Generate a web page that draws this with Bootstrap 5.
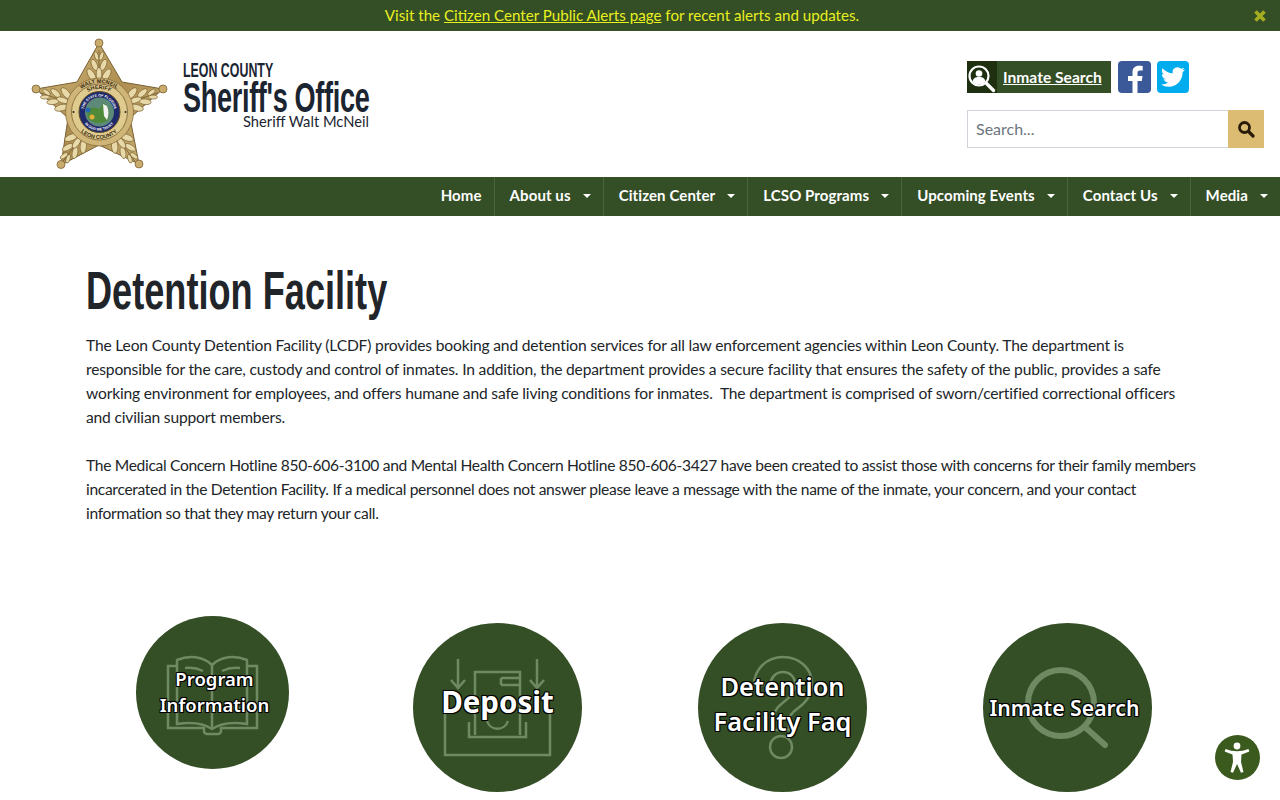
<!DOCTYPE html>
<html lang="en">

<head>
    <meta charset="UTF-8">
    <meta name="viewport" content="width=device-width, initial-scale=1.0">
    <title>Detention Facility - Leon County Sheriff's Office</title>
    <link href="https://cdn.jsdelivr.net/npm/bootstrap@5.3.0/dist/css/bootstrap.min.css" rel="stylesheet">
    <style>
        body {
            font-family: "Lato", "Liberation Sans", sans-serif;
            font-size: 16px;
            line-height: 24px;
            color: #212529;
            background: #fff;
        }

        .lc-alert {
            height: 31px;
            padding-right: 36px;
            background: #344e26;
            color: #e9f01f;
            font-size: 15.15px;
            line-height: 31px;
        }

        .lc-alert a { color: #e9f01f; }

        .lc-close {
            position: absolute;
            top: 9px;
            right: 13px;
            width: 14px;
            height: 14px;
            padding: 0;
            border: 0;
            background: none;
            line-height: 0;
        }

        .lc-head { height: 146px; padding: 7px 16px 0 30px; }

        .lc-brand {
            width: 186px;
            margin: 23px 0 0 13px;
            color: #1b2431;
        }

        /* no condensed family is installed, so the headline text is squeezed */
        .lc-county, .lc-office, .lc-title {
            font-family: "Liberation Sans", sans-serif;
            font-weight: 700;
            white-space: nowrap;
            transform-origin: left center;
        }

        .lc-county { font-size: 21px; line-height: 18px; transform: scaleX(.59); }
        .lc-office { font-size: 42px; line-height: 39px; margin-top: -1px; letter-spacing: -.5px; transform: scaleX(.645); }
        .lc-sheriff { font-size: 14.7px; line-height: 15px; text-align: right; margin-top: -3px; }

        .lc-side { width: 297px; padding-top: 23px; }

        .lc-inmate {
            width: 144px;
            height: 32px;
            background: #344e26;
            color: #fff;
            font-weight: 700;
            font-size: 15.6px;
            line-height: 33px;
        }

        .lc-inmate a { color: #fff; }

        .lc-inmate-ico {
            width: 30px;
            height: 32px;
            background: #1e3010;
            margin-right: 6px;
        }

        .lc-social { width: 33px; height: 32px; border-radius: 4px; }
        .lc-fb { background: #3b5998; margin-left: 7px; overflow: hidden; }
        .lc-tw { background: #00acee; margin-left: 6px; width: 32px; }

        .lc-search { margin-top: 17px; height: 38px; }

        .lc-search .form-control {
            height: 38px;
            border-radius: 0;
            font-size: 16px;
            padding: 0 8px 2px;
            border-color: #ced4da;
        }

        .lc-search .form-control::placeholder { color: #6c757d; }

        .lc-search .btn {
            width: 36px;
            height: 38px;
            padding: 0 0 3px;
            border: 0;
            border-radius: 0;
            background: #dcbc73;
        }

        .lc-nav {
            height: 39px;
            padding: 0;
            background: #344e26;
            justify-content: flex-end;
        }

        .lc-nav .navbar-nav { flex-direction: row; }

        .lc-nav .nav-item + .nav-item { border-left: 1px solid #4a6339; }

        .lc-nav .nav-link {
            display: flex;
            align-items: center;
            height: 39px;
            padding: 0 12px 3px 15px;
            color: #fff;
            font-weight: 700;
            font-size: 15px;
            letter-spacing: .1px;
        }

        .lc-nav .lc-caret::after {
            content: "";
            margin: 2px 0 0 12px;
            border-top: 4px solid #fff;
            border-left: 4px solid transparent;
            border-right: 4px solid transparent;
        }

        .lc-main { padding-top: 44px; }

        .lc-title {
            font-size: 53px;
            line-height: 62px;
            color: #212529;
            margin: 0 0 11px;
            transform: scaleX(.682);
        }

        .lc-text { margin: 0 0 24px; font-size: 15.6px; letter-spacing: -.17px; }

        .lc-text-tight { letter-spacing: -.32px; margin-right: -8px; }

        .lc-tiles { margin-top: 91px; }

        .lc-tile {
            position: relative;
            width: 169px;
            height: 169px;
            margin: 7px auto 0;
            border-radius: 50%;
            background: #344e26;
            color: #fff;
            font-family: "Noto Sans", "Liberation Sans", sans-serif;
            font-weight: 600;
            text-align: center;
            text-decoration: none;
            text-shadow: -1px -1px 0 #000, 1px -1px 0 #000, -1px 1px 0 #000, 1px 1px 0 #000, 0 0 2px #000;
        }

        .lc-tile svg { position: absolute; inset: 0; }

        .lc-tile span { position: relative; }

        .lc-tile-program { width: 153px; height: 153px; margin-top: 0; font-size: 18.5px; line-height: 26px; }
        .lc-tile-program span { padding: 0 0 2px 4px; }
        .lc-tile-deposit { font-size: 29.5px; line-height: 34px; font-weight: 700; }
        .lc-tile-deposit span { padding-bottom: 12px; }
        .lc-tile-faq { font-size: 25.4px; line-height: 35px; }
        .lc-tile-search { font-size: 21.2px; line-height: 30px; }
        .lc-tile-search span { padding-right: 6px; }

        .lc-a11y {
            position: fixed;
            right: 20px;
            bottom: 20px;
            width: 45px;
            height: 45px;
            border-radius: 50%;
            background: #3a5a1e;
        }
    </style>
</head>

<body>
    <!-- Alert -->
    <div class="lc-alert position-relative text-center">
        Visit the <a href="#">Citizen Center Public Alerts page</a> for recent alerts and updates.
        <button class="lc-close" type="button" aria-label="Close">
            <svg width="14" height="14" viewBox="0 0 14 14"><path d="M2.5 2.5l9 9M11.5 2.5l-9 9" stroke="#a5ae23" stroke-width="3.6"/></svg>
        </button>
    </div>

    <!-- Header -->
    <header class="lc-head d-flex">
        <svg width="140" height="132" viewBox="30 38 140 132" role="img" aria-label="Sheriff star">
            <defs>
                <linearGradient id="gold" x1="0" y1="0" x2="1" y2="1">
                    <stop offset="0" stop-color="#d4bb7e"/>
                    <stop offset=".5" stop-color="#ad8e50"/>
                    <stop offset="1" stop-color="#cdb577"/>
                </linearGradient>
                <g id="arm">
                    <path d="M99 50V82" stroke="#7a6033" stroke-width=".8"/>
                    <g fill="#e8d9a8" stroke="#7e6234" stroke-width=".7">
                        <ellipse cx="96.500" cy="56" rx="2" ry="4.500" transform="rotate(-18 96.500 56)"/>
                        <ellipse cx="101.500" cy="56" rx="2" ry="4.500" transform="rotate(18 101.500 56)"/>
                        <ellipse cx="94.500" cy="65" rx="2.800" ry="6" transform="rotate(-24 94.500 65)"/>
                        <ellipse cx="103.500" cy="65" rx="2.800" ry="6" transform="rotate(24 103.500 65)"/>
                        <ellipse cx="91.500" cy="75" rx="3.200" ry="7" transform="rotate(-32 91.500 75)"/>
                        <ellipse cx="106.500" cy="75" rx="3.200" ry="7" transform="rotate(32 106.500 75)"/>
                        <ellipse cx="99" cy="74" rx="2.800" ry="6.500"/>
                    </g>
                </g>
                <path id="ringTop" d="M70 112a29 29 0 0 1 58 0"/>
                <path id="ringMid" d="M76 112a23 23 0 0 1 46 0"/>
                <path id="ringBot" d="M72 112a27 27 0 0 0 54 0"/>
                <path id="sealTop" d="M83.500 112a15.500 15.500 0 0 1 31 0"/>
                <path id="sealBot" d="M80.500 112a18.500 18.500 0 0 0 37 0"/>
            </defs>
            <path d="M99 43L122 82 163 89 130 118 139 164 99 145 61 165 68 118 36 89 77 82Z" fill="url(#gold)" stroke="#7a6033" stroke-width="1"/>
            <use href="#arm"/>
            <use href="#arm" transform="rotate(72 99 112)"/>
            <use href="#arm" transform="rotate(144 99 112)"/>
            <use href="#arm" transform="rotate(216 99 112)"/>
            <use href="#arm" transform="rotate(288 99 112)"/>
            <g fill="#c9ab6b" stroke="#7f6436" stroke-width=".8">
                <circle cx="99" cy="43" r="4"/>
                <circle cx="36" cy="89" r="4"/>
                <circle cx="163" cy="89" r="4"/>
                <circle cx="61" cy="164.500" r="4"/>
                <circle cx="139" cy="164" r="4"/>
            </g>
            <circle cx="99.500" cy="112" r="34" fill="#cfb577" stroke="#8a6f3c" stroke-width=".8"/>
            <circle cx="99.500" cy="112" r="28" fill="#e0cb8e" stroke="#7a6033" stroke-width=".8"/>
            <circle cx="99.500" cy="112" r="20.500" fill="#1f2a6c" stroke="#5e4a26" stroke-width="1"/>
            <circle cx="99.500" cy="112" r="14.500" fill="#5d8a78"/>
            <path d="M87 112c3-6 8-5 12-3l5-6 4 4c2 5 2 9-1 14-6 3-14 3-19-3z" fill="#4f8a3a"/>
            <path d="M103 104l4 2c2 5 2 9 0 14l-3-4z" fill="#f1f3f2"/>
            <circle cx="92" cy="117" r="2.500" fill="#e0b03a"/>
            <circle cx="88" cy="110" r="2.500" fill="#2669b2"/>
            <g font-family="Liberation Sans, sans-serif" font-weight="700" font-size="5.500" fill="#3a2c14" text-anchor="middle">
                <text><textPath href="#ringTop" startOffset="50%">WALT MCNEIL</textPath></text>
                <text><textPath href="#ringMid" startOffset="50%">SHERIFF</textPath></text>
                <text><textPath href="#ringBot" startOffset="50%">LEON COUNTY</textPath></text>
            </g>
            <g font-family="Liberation Sans, sans-serif" font-weight="700" font-size="3.600" fill="#fff" text-anchor="middle">
                <text><textPath href="#sealTop" startOffset="50%">THE STATE OF FLORIDA</textPath></text>
                <text><textPath href="#sealBot" startOffset="50%">IN GOD WE TRUST</textPath></text>
            </g>
            <circle cx="73.500" cy="112" r="1" fill="#222"/>
            <circle cx="125.500" cy="112" r="1" fill="#222"/>
        </svg>
        <div class="lc-brand">
            <div class="lc-county">LEON COUNTY</div>
            <div class="lc-office">Sheriff's Office</div>
            <div class="lc-sheriff">Sheriff Walt McNeil</div>
        </div>
        <div class="lc-side ms-auto">
            <div class="d-flex">
                <div class="lc-inmate d-flex">
                    <div class="lc-inmate-ico">
                        <svg width="30" height="32" viewBox="0 0 30 32">
                            <circle cx="12" cy="13" r="9.500" fill="#1e3010" stroke="#fff" stroke-width="2.200"/>
                            <circle cx="12" cy="10.500" r="3.300" fill="#fff"/>
                            <path d="M5.500 19c.5-4 3-5 6.500-5s6 1 6.500 5a9 9 0 0 1-13 0z" fill="#fff"/>
                            <path d="M19.500 20.500l7 7" stroke="#fff" stroke-width="3.400" stroke-linecap="round"/>
                        </svg>
                    </div>
                    <a href="#">Inmate Search</a>
                </div>
                <a class="lc-social lc-fb d-block" href="#" aria-label="Facebook">
                    <svg width="33" height="32" viewBox="0 0 33 32"><path d="M19.500 32V20h4.300l.7-5h-5v-3.200c0-1.500.6-2.400 2.500-2.400h2.700V5c-.6-.1-2.200-.2-3.900-.2-3.800 0-6.300 2.300-6.300 6.600V15h-4.500v5h4.500v12z" fill="#fff"/></svg>
                </a>
                <a class="lc-social lc-tw d-block" href="#" aria-label="Twitter">
                    <svg class="d-block m-auto mt-1" width="24" height="24" viewBox="0 0 24 24"><path d="M23.953 4.57a10 10 0 01-2.825.775 4.958 4.958 0 002.163-2.723c-.951.555-2.005.959-3.127 1.184a4.920 4.920 0 00-8.384 4.482C7.690 8.095 4.067 6.130 1.640 3.162a4.822 4.822 0 00-.666 2.475c0 1.710.870 3.213 2.188 4.096a4.904 4.904 0 01-2.228-.616v.060a4.923 4.923 0 003.946 4.827 4.996 4.996 0 01-2.212.085 4.936 4.936 0 004.604 3.417 9.867 9.867 0 01-6.102 2.105c-.390 0-.779-.023-1.170-.067a13.995 13.995 0 007.557 2.209c9.053 0 13.998-7.496 13.998-13.985 0-.210 0-.420-.015-.630A9.935 9.935 0 0024 4.590z" fill="#fff"/></svg>
                </a>
            </div>
            <form class="lc-search input-group">
                <input class="form-control" type="text" placeholder="Search..." aria-label="Search">
                <button class="btn" type="button" aria-label="Search">
                    <svg width="18" height="18" viewBox="0 0 18 18"><circle cx="7.500" cy="7.500" r="5" fill="none" stroke="#2a1c08" stroke-width="2.800"/><path d="M11.500 11.500l4.500 4.500" stroke="#2a1c08" stroke-width="3.200" stroke-linecap="round"/></svg>
                </button>
            </form>
        </div>
    </header>

    <!-- Main nav -->
    <nav class="navbar lc-nav">
        <ul class="navbar-nav">
            <li class="nav-item"><a class="nav-link" href="#">Home</a></li>
            <li class="nav-item"><a class="nav-link lc-caret" href="#">About us</a></li>
            <li class="nav-item"><a class="nav-link lc-caret" href="#">Citizen Center</a></li>
            <li class="nav-item"><a class="nav-link lc-caret" href="#">LCSO Programs</a></li>
            <li class="nav-item"><a class="nav-link lc-caret" href="#">Upcoming Events</a></li>
            <li class="nav-item"><a class="nav-link lc-caret" href="#">Contact Us</a></li>
            <li class="nav-item"><a class="nav-link lc-caret" href="#">Media</a></li>
        </ul>
    </nav>

    <main class="container px-0 lc-main">
        <div class="px-3">
            <h1 class="lc-title">Detention Facility</h1>
            <p class="lc-text">The Leon County Detention Facility (LCDF) provides booking and detention services for all law enforcement agencies within Leon County. The department is responsible for the care, custody and control of inmates. In addition, the department provides a secure facility that ensures the safety of the public, provides a safe working environment for employees, and offers humane and safe living conditions for inmates.&nbsp; The department is comprised of sworn/certified correctional officers and civilian support members.</p>
            <p class="lc-text lc-text-tight">The Medical Concern Hotline 850-606-3100 and Mental Health Concern Hotline 850-606-3427 have been created to assist those with concerns for their family members incarcerated in the Detention Facility. If a medical personnel does not answer please leave a message with the name of the inmate, your concern, and your contact information so that they may return your call.</p>
        </div>

        <div class="row g-0 lc-tiles">
            <div class="col-3">
                <a class="lc-tile lc-tile-program d-flex align-items-center justify-content-center" href="#">
                    <svg width="153" height="153" viewBox="0 0 153 153" fill="none" stroke="#6f8a63" stroke-width="2.500">
                        <path d="M41 50h-9v62h36v3a3 3 0 0 0 3 3h11a3 3 0 0 0 3-3v-3h36V50h-9"/>
                        <path d="M41 108V44c12-5 26-4 35 5 9-9 23-10 35-5v64c-12-2-26-1-35 5-9-6-23-7-35-5z"/>
                        <path d="M76 49v64M49 52c7-1 12 0 18 3M86 55c6-3 11-4 18-3M49 92c7-1 12 0 18 3M86 95c6-3 11-4 18-3"/>
                    </svg>
                    <span>Program<br>Information</span>
                </a>
            </div>
            <div class="col-3">
                <a class="lc-tile lc-tile-deposit d-flex align-items-center justify-content-center" href="#">
                    <svg width="169" height="169" viewBox="0 0 169 169" fill="none" stroke="#6f8a63" stroke-width="2.500">
                        <path d="M45 36v28M38 57l7 8 7-8M124 36v28M117 57l7 8 7-8"/>
                        <path d="M32 89v43h105V89M62 112V49h45v63M56 99v15h57V99M88 55h19M88 62h19M88 55v7"/>
                        <path d="M74 98a11 11 0 0 0 21 0"/>
                    </svg>
                    <span>Deposit</span>
                </a>
            </div>
            <div class="col-3">
                <a class="lc-tile lc-tile-faq d-flex align-items-center justify-content-center" href="#">
                    <svg width="169" height="169" viewBox="0 0 169 169" fill="none" stroke="#6f8a63" stroke-width="2.500">
                        <path d="M56 62c0-16 13-28 29-28s29 11 29 27c0 12-7 19-15 25-7 5-8 8-8 15v6H75v-8c0-10 4-15 12-21 6-5 10-9 10-17 0-7-5-12-12-12s-12 5-13 13z"/>
                        <circle cx="83" cy="124" r="11"/>
                    </svg>
                    <span class="pb-2">Detention<br>Facility Faq</span>
                </a>
            </div>
            <div class="col-3">
                <a class="lc-tile lc-tile-search d-flex align-items-center justify-content-center" href="#">
                    <svg width="169" height="169" viewBox="0 0 169 169" fill="none" stroke="#6f8a63" stroke-width="6" stroke-linecap="round">
                        <circle cx="78" cy="80" r="33"/>
                        <path d="M103 105l19 17"/>
                    </svg>
                    <span>Inmate Search</span>
                </a>
            </div>
        </div>
    </main>

    <!-- Accessibility button -->
    <a class="lc-a11y d-block" href="#" aria-label="Accessibility">
        <svg class="d-block" width="45" height="45" viewBox="0 0 45 45">
            <circle cx="22" cy="11" r="3.400" fill="#fff"/>
            <path d="M10.500 14Q22 18.500 33.500 14L34.300 16.500Q29.500 18.500 26.500 19.500L26 27 28.500 37 26 37.800 22 29 18 37.800 15.500 37 18 27 17.500 19.500Q14.500 18.500 9.700 16.500Z" fill="#fff"/>
        </svg>
    </a>

    <script src="https://cdn.jsdelivr.net/npm/bootstrap@5.3.0/dist/js/bootstrap.bundle.min.js"></script>
</body>

</html>
